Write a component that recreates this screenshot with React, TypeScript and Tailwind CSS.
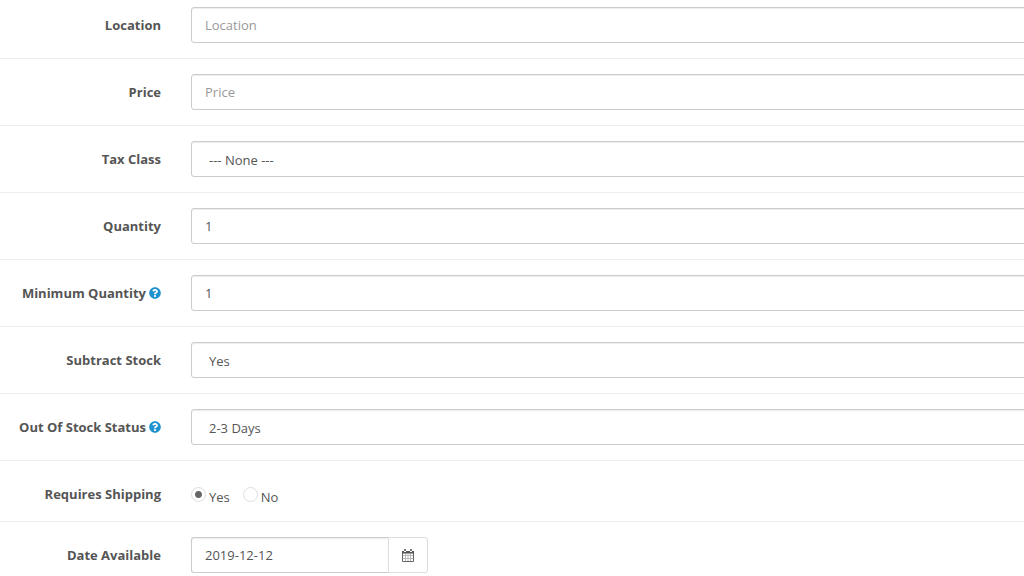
import React from 'react';
import clsx from 'clsx';
import { FaQuestionCircle } from 'react-icons/fa';

const controlClass =
  'h-9 w-full border border-[#ccc] bg-white text-[13px] text-[#555] placeholder:text-[#999] shadow-[inset_0_1px_1px_rgba(0,0,0,0.075)] outline-none focus:border-[#66afe9]';

// Row of the horizontal form: right aligned label and its control
interface FormRowProps {
  label: string;
  htmlFor?: string;
  id?: string;
  help?: string;
  children: React.ReactNode;
}

function FormRow({ label, htmlFor, id, help, children }: FormRowProps) {
  const labelClass = 'flex items-center justify-end gap-[3px] text-[13px] leading-5 font-bold text-[#555]';
  const content = (
    <>
      {label}
      {help && <FaQuestionCircle className="size-3 text-[#1e91cf]" title={help} />}
    </>
  );

  return (
    <div className="flex border-t border-[#ededed] py-[15px] first:border-t-0 first:pt-[7px]">
      <div className="w-44 shrink-0 pt-2 pr-[15px]">
        {htmlFor ? (
          <label htmlFor={htmlFor} className={labelClass}>{content}</label>
        ) : (
          <span id={id} className={labelClass}>{content}</span>
        )}
      </div>
      <div className="min-w-0 flex-1 pl-[15px]">{children}</div>
    </div>
  );
}

function TextInput({ className, ...props }: React.InputHTMLAttributes<HTMLInputElement>) {
  return <input type="text" className={clsx(controlClass, 'rounded-[3px] px-[13px]', className)} {...props} />;
}

interface SelectProps {
  id: string;
  options: string[];
  defaultValue: string;
}

function Select({ id, options, defaultValue }: SelectProps) {
  return (
    <select
      id={id}
      defaultValue={defaultValue}
      className={clsx(controlClass, 'appearance-none rounded-[3px] px-[17px] pt-[3px]')}
    >
      {options.map((option) => (
        <option key={option}>{option}</option>
      ))}
    </select>
  );
}

interface RadioProps {
  name: string;
  label: string;
  defaultChecked?: boolean;
}

function Radio({ name, label, defaultChecked }: RadioProps) {
  return (
    <label className="flex items-start gap-[3px] text-[13px] leading-[18px] text-[#555]">
      <input
        type="radio"
        name={name}
        value={label}
        defaultChecked={defaultChecked}
        className="size-[15px] appearance-none rounded-full border border-[#ddd] bg-white checked:bg-[radial-gradient(circle,#666_3px,transparent_4px)]"
      />
      <span className="pt-px">{label}</span>
    </label>
  );
}

function CalendarIcon() {
  return (
    <svg viewBox="0 0 12 14" fill="none" className="h-[14px] w-3" aria-hidden="true">
      <path d="M3.5 5v8M6 5v8M8.5 5v8M1 7.5h10M1 10.5h10" stroke="#bbb" />
      <path d="M.5 4v9.5h11V4" stroke="#666" />
      <path d="M0 3h2v1h2V3h4v1h2V3h2v2.5H0z" fill="#555" />
      <path d="M2 1h2v2H2zM8 1h2v2H8z" fill="#777" />
    </svg>
  );
}

export default function App() {
  return (
    <main className="overflow-hidden bg-white font-['Open_Sans',sans-serif]">
      {/* Fields run past the right edge of the viewport */}
      <form className="-mr-4">
        <FormRow label="Location" htmlFor="location">
          <TextInput id="location" placeholder="Location" />
        </FormRow>
        <FormRow label="Price" htmlFor="price">
          <TextInput id="price" placeholder="Price" />
        </FormRow>
        <FormRow label="Tax Class" htmlFor="tax-class">
          <Select id="tax-class" options={['--- None ---']} defaultValue="--- None ---" />
        </FormRow>
        <FormRow label="Quantity" htmlFor="quantity">
          <TextInput id="quantity" defaultValue="1" />
        </FormRow>
        <FormRow label="Minimum Quantity" htmlFor="minimum" help="Minimum Quantity">
          <TextInput id="minimum" defaultValue="1" />
        </FormRow>
        <FormRow label="Subtract Stock" htmlFor="subtract">
          <Select id="subtract" options={['Yes', 'No']} defaultValue="Yes" />
        </FormRow>
        <FormRow label="Out Of Stock Status" htmlFor="stock-status" help="Out Of Stock Status">
          <Select id="stock-status" options={['2-3 Days']} defaultValue="2-3 Days" />
        </FormRow>
        <FormRow label="Requires Shipping" id="shipping-label">
          <div role="radiogroup" aria-labelledby="shipping-label" className="flex gap-[13px] pt-[11px]">
            <Radio name="shipping" label="Yes" defaultChecked />
            <Radio name="shipping" label="No" />
          </div>
        </FormRow>
        <FormRow label="Date Available" htmlFor="date-available">
          <div className="flex">
            <div className="w-[197px]">
              <input
                type="text"
                id="date-available"
                defaultValue="2019-12-12"
                className={clsx(controlClass, 'rounded-l-[3px] border-r-0 px-[13px]')}
              />
            </div>
            <button
              type="button"
              aria-label="Choose date"
              className="flex h-9 w-10 items-center justify-center rounded-r-[3px] border border-[#ddd] bg-white text-[#555]"
            >
              <CalendarIcon />
            </button>
          </div>
        </FormRow>
      </form>
    </main>
  );
}
